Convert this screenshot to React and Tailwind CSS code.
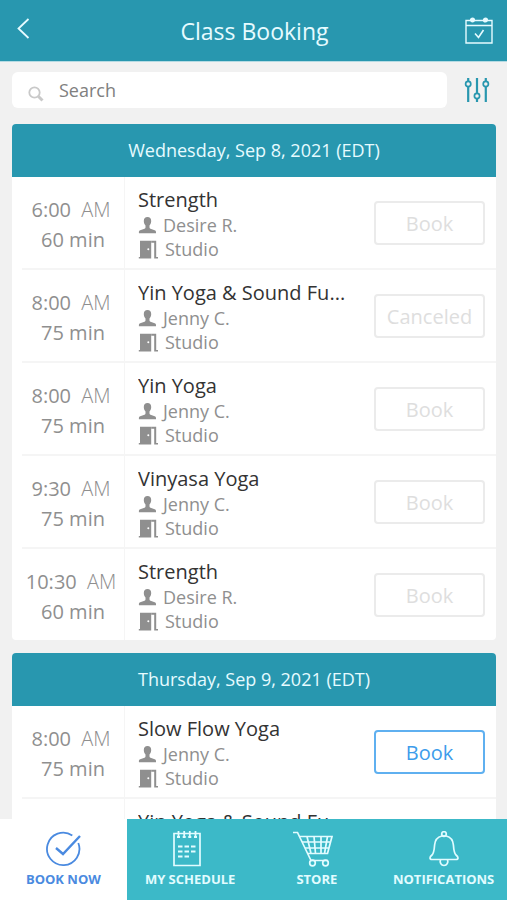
import React, { useState } from "react";

const days = [
  {
    date: "Wednesday, Sep 8, 2021 (EDT)",
    classes: [
      { time: "6:00", length: "60 min", name: "Strength", teacher: "Desire R.", status: "closed" },
      { time: "8:00", length: "75 min", name: "Yin Yoga & Sound Fu...", teacher: "Jenny C.", status: "canceled" },
      { time: "8:00", length: "75 min", name: "Yin Yoga", teacher: "Jenny C.", status: "closed" },
      { time: "9:30", length: "75 min", name: "Vinyasa Yoga", teacher: "Jenny C.", status: "closed" },
      { time: "10:30", length: "60 min", name: "Strength", teacher: "Desire R.", status: "closed" },
    ],
  },
  {
    date: "Thursday, Sep 9, 2021 (EDT)",
    classes: [
      { time: "8:00", length: "75 min", name: "Slow Flow Yoga", teacher: "Jenny C.", status: "open" },
      { time: "9:30", length: "75 min", name: "Yin Yoga & Sound Fu...", teacher: "Jenny C.", status: "open" },
    ],
  },
];

const BackIcon = () => (
  <svg width="14" height="22" viewBox="0 0 14 22" fill="none" stroke="currentColor" strokeWidth="1.8">
    <path d="M12.500 1 2.500 10.500l10 9.500" />
  </svg>
);

const CalendarIcon = () => (
  <svg width="28" height="28" viewBox="0 0 28 28" fill="none" stroke="currentColor" strokeWidth="1.4">
    <path d="M5.500 3.500H1v22.500h26V3.500h-4.500M9 3.500h10M1 8.500h26" />
    <circle cx="7.500" cy="3" r="1.900" fill="currentColor" />
    <circle cx="20.500" cy="3" r="1.900" fill="currentColor" />
    <path d="m10 16.500 3.500 4L18.500 13" strokeWidth="1.600" />
  </svg>
);

const SearchIcon = () => (
  <svg width="16" height="16" viewBox="0 0 16 16" fill="none" stroke="currentColor">
    <circle cx="6.500" cy="6.500" r="5.200" strokeWidth="1.800" />
    <path d="m10.500 10.500 4 4" strokeWidth="3" />
  </svg>
);

const FilterIcon = () => (
  <svg width="26" height="26" viewBox="0 0 26 26" fill="none" stroke="currentColor" strokeWidth="2.200">
    <path d="M4.200 1v3M4.200 9.500V25M13 1v15.500M13 22v3M21.800 1v3M21.800 9.500V25" />
    <circle cx="4.200" cy="7" r="2.600" strokeWidth="1.700" />
    <circle cx="13" cy="19" r="2.600" strokeWidth="1.700" />
    <circle cx="21.800" cy="7" r="2.600" strokeWidth="1.700" />
  </svg>
);

const PersonIcon = () => (
  <svg width="18" height="17" viewBox="0 0 18 17" fill="currentColor">
    <path d="M9.500 0C7.200 0 5.800 1.600 5.800 3.900c0 1.700.6 3.400 1.700 4.600v2.100c0 .6-.4 1-1 1.200l-4.300 1.500c-.9.300-1.300.9-1.300 1.800V16.200h17.100v-1.100c0-.9-.4-1.500-1.300-1.800l-4.200-1.500c-.6-.2-1-.6-1-1.200V8.500c1.100-1.200 1.700-2.900 1.700-4.600C13.200 1.600 11.800 0 9.500 0z" />
  </svg>
);

const DoorIcon = () => (
  <svg width="20" height="19" viewBox="0 0 20 19" fill="currentColor">
    <path
      fillRule="evenodd"
      d="M2 .8h11.200V18.600H.8V17H2zM10.300 8.300a1 1 0 1 0 0 2 1 1 0 0 0 0-2z"
    />
    <path d="M13.200.8h5V17H20v1.600h-3.800V2.800h-3z" />
  </svg>
);

const CheckCircleIcon = () => (
  <svg width="36" height="36" viewBox="0 0 36 36" fill="none" stroke="currentColor">
    <path d="M27.300 4.500A16.200 16.200 0 1 0 33.300 12" strokeWidth="1.800" />
    <path d="m11 17 7 6L35 5" strokeWidth="2.400" />
  </svg>
);

const ScheduleIcon = () => (
  <svg width="36" height="36" viewBox="0 0 36 36" fill="none" stroke="currentColor">
    <path d="M2 2.500h26v32H2z" strokeWidth="1.700" />
    <path d="M6.500 0v6M12.200 0v6M17.800 0v6M23.500 0v6" strokeWidth="1.800" />
    <path
      d="M5 6h3M10.700 6h3M16.300 6h3M22 6h3M6 15.500h4.500M12.500 15.500H17M19 15.500h4.500M6 20.500h4.500M12.500 20.500H17M19 20.500h4.500M6 25.500h4.500M12.500 25.500H17"
      strokeWidth="2.200"
    />
  </svg>
);

const CartIcon = () => (
  <svg width="50" height="36" viewBox="0 0 50 36" fill="none" stroke="currentColor" strokeWidth="1.700">
    <path d="M1 1.500h4.500L19 29.500h17" />
    <path d="M8 5.500h32l-4.500 17H16M10 11h28.500M13 17h24M15 5.500l4 17M22 5.500l1.500 17M29 5.500V22.500M35.500 5.500l-3 17" />
    <circle cx="20.500" cy="32" r="2.800" />
    <circle cx="33.500" cy="32" r="2.800" />
  </svg>
);

const BellIcon = () => (
  <svg width="36" height="36" viewBox="0 0 36 36" fill="none" stroke="currentColor" strokeWidth="1.700">
    <circle cx="18" cy="3" r="2.300" />
    <path d="M15.800 5C11.500 6 9 9.300 8.600 14c-.4 5.500-.8 8.500-2.600 10-1.500 1.200-2 2-2 3 0 1 .8 1.500 2 1.500h24c1.200 0 2-.5 2-1.500 0-1-.5-1.800-2-3-1.800-1.500-2.200-4.500-2.600-10C27 9.300 24.500 6 20.200 5z" />
    <path d="M14.500 28.500c-1 3 .5 6 3.500 6s4.500-3 3.500-6" />
  </svg>
);

const tabs = [
  { label: "BOOK NOW", Icon: CheckCircleIcon },
  { label: "MY SCHEDULE", Icon: ScheduleIcon },
  { label: "STORE", Icon: CartIcon },
  { label: "NOTIFICATIONS", Icon: BellIcon },
];

function ClassRow({ item }) {
  const open = item.status === "open";

  return (
    <li className="group flex h-[93px] last:h-[91px]">
      {/* Time */}
      <div className="ml-[10px] w-[102px] shrink-0 border-b-2 border-[#f5f5f5] pt-[18px] text-center text-[20px] leading-[30px] text-[#8f8f8f] group-last:border-b-0">
        <p className="pr-1 whitespace-nowrap">
          {item.time} <span className="ml-[5px] font-light">AM</span>
        </p>
        <p>{item.length}</p>
      </div>

      {/* Class details */}
      <div className="flex min-w-0 flex-1 items-start border-b-2 border-l border-[#f5f5f5] pr-[11px] group-last:border-b-0">
        <div className="min-w-0 flex-1 pt-[9px] pl-[13px]">
          <h3 className="truncate text-[20px] leading-[27px] text-[#333333]">{item.name}</h3>
          <p className="flex items-center gap-[7px] text-[18px] leading-6 text-[#8f8f8f]">
            <PersonIcon />
            {item.teacher}
          </p>
          <p className="flex items-center gap-[7px] text-[18px] leading-6 text-[#8f8f8f]">
            <DoorIcon />
            Studio
          </p>
        </div>
        <button
          type="button"
          disabled={!open}
          className={`mt-6 h-11 w-[111px] shrink-0 rounded-[4px] border-2 pt-px text-[20px] leading-6 ${
            open ? "border-[#5fb0f0] text-[#3d9ceb]" : "border-[#ebebeb] text-[#dedede]"
          }`}
        >
          {item.status === "canceled" ? "Canceled" : "Book"}
        </button>
      </div>
    </li>
  );
}

export default function App() {
  const [searchQuery, setSearchQuery] = useState("");
  const [activeTab, setActiveTab] = useState("BOOK NOW");

  return (
    <div className="flex h-screen flex-col bg-[#f1f1f1] font-['Open_Sans','Noto_Sans',sans-serif]">
      {/* Header */}
      <header className="flex h-[62px] shrink-0 items-center justify-between border-b border-[#b5dbe3] bg-[#2897af] pr-[14px] pl-4 text-[#e6fbff]">
        <button type="button" aria-label="Back" className="w-7 pb-1">
          <BackIcon />
        </button>
        <h1 className="text-[23px] leading-8">Class Booking</h1>
        <button type="button" aria-label="My calendar" className="w-7">
          <CalendarIcon />
        </button>
      </header>

      <main className="min-h-0 flex-1 overflow-y-auto px-3 [scrollbar-width:none]">
        {/* Search Bar */}
        <div className="flex items-center justify-between pt-[10px] pr-[5px]">
          <label className="mr-[17px] flex h-9 flex-1 items-center rounded-md bg-white pl-4 text-[#c9c9c9]">
            <span className="pt-2">
              <SearchIcon />
            </span>
            <input
              type="text"
              aria-label="Search"
              placeholder="Search"
              value={searchQuery}
              onChange={(e) => setSearchQuery(e.target.value)}
              className="ml-[15px] min-w-0 flex-1 bg-transparent text-[18px] leading-6 text-[#777777] outline-none placeholder:text-[#808080]"
            />
          </label>
          <button type="button" aria-label="Filters" className="text-[#2897af]">
            <FilterIcon />
          </button>
        </div>

        {/* Days */}
        {days.map((day) => (
          <section key={day.date} className="mt-[13px] -mr-px overflow-hidden rounded-[4px] bg-white first-of-type:mt-4">
            <h2 className="bg-[#2897af] text-center text-[18px] leading-[53px] text-[#e6fbff]">
              {day.date}
            </h2>
            <ul>
              {day.classes.map((item, index) => (
                <ClassRow key={index} item={item} />
              ))}
            </ul>
          </section>
        ))}
      </main>

      {/* Bottom tabs */}
      <nav className="grid h-[81px] shrink-0 grid-cols-4 bg-[#3cb9c8]">
        {tabs.map(({ label, Icon }) => (
          <button
            key={label}
            type="button"
            onClick={() => setActiveTab(label)}
            className={`flex flex-col items-center pt-3 text-[13px] leading-6 font-bold whitespace-nowrap ${
              activeTab === label ? "bg-white text-[#4a8ae0]" : "text-[#e2fcff]"
            }`}
          >
            <Icon />
            {label}
          </button>
        ))}
      </nav>
    </div>
  );
}
